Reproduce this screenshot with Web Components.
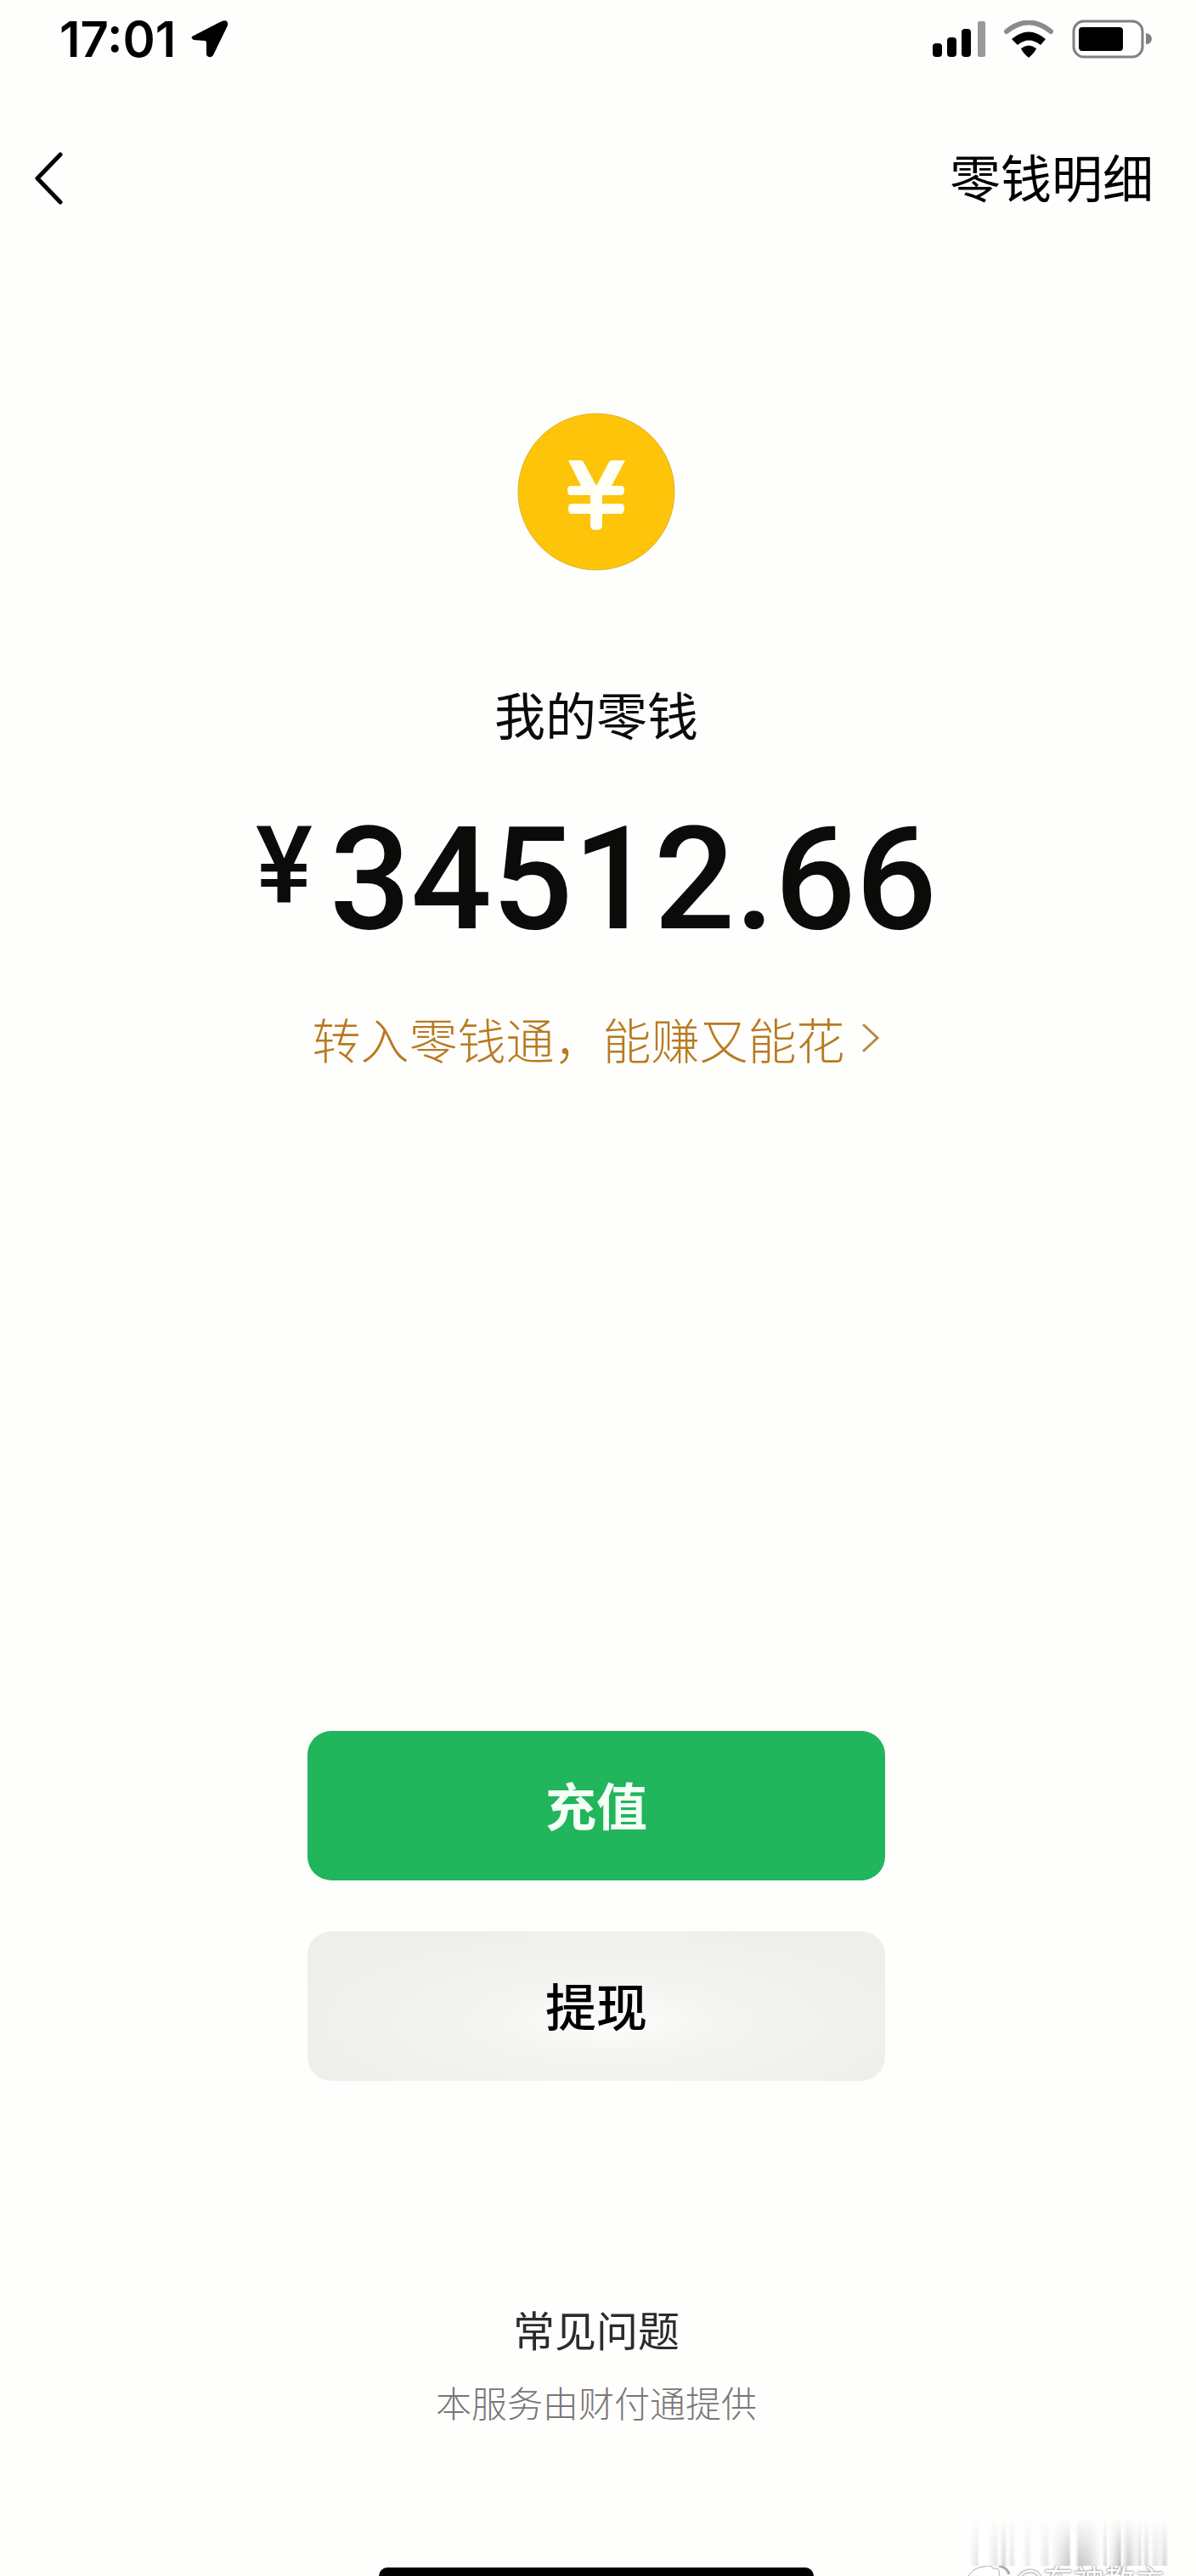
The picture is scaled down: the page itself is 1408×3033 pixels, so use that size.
<!DOCTYPE html>
<html lang="zh-CN">
<head>
<meta charset="UTF-8">
<meta name="viewport" content="width=device-width, initial-scale=1.0">
<title>零钱</title>
<style>
    body {
        margin: 0;
        background-color: #fefefd;
        color: #0b0b0a;
        font-family: "Noto Sans CJK SC", sans-serif;
    }
</style>
</head>
<body>
<wallet-page>
    <status-bar slot="top" time="17:01"></status-bar>
    <nav-bar slot="top">零钱明细</nav-bar>
    <balance-card amount="34512.66">
        我的零钱
        <span slot="promo">转入零钱通，能赚又能花</span>
    </balance-card>
    <action-button variant="primary">充值</action-button>
    <action-button>提现</action-button>
    <page-footer slot="bottom" note="本服务由财付通提供">常见问题</page-footer>
    <water-mark slot="mark">@东神教主</water-mark>
</wallet-page>

<script>
class WalletPage extends HTMLElement {
    constructor() {
        super();
        this.attachShadow({ mode: 'open' });
        this.shadowRoot.innerHTML = `
        <style>
:host {
    position: relative;
    display: flex;
    flex-direction: column;
    min-height: 100vh;
}
main {
    display: flex;
    flex-direction: column;
    align-items: center;
    gap: 60px;
    padding-right: 4px;
}
        </style>
        <header><slot name="top"></slot></header>
        <main><slot></slot></main>
        <slot name="bottom"></slot>
        <slot name="mark"></slot>
        `;
    }
}

class StatusBar extends HTMLElement {
    constructor() {
        super();
        this.attachShadow({ mode: 'open' });
    }

    connectedCallback() {
        this.shadowRoot.innerHTML = `
        <style>
:host {
    display: flex;
    justify-content: space-between;
    align-items: center;
    height: 92px;
    padding: 0 52px 0 70px;
}
.left, .right {
    display: flex;
    align-items: center;
}
.left {
    gap: 18px;
}
.right {
    gap: 22px;
}
time {
    font: 600 58px/92px Inter, sans-serif;
    color: #000;
}
svg {
    display: block;
}
        </style>
        <div class="left">
            <time>${this.getAttribute('time')}</time>
            <svg width="44" height="46" viewBox="0 0 44 46" aria-hidden="true">
                <path d="M3 19 L36 2 Q44 -1 43 7 L26 42 Q23 46 19 43 Q18 42 18 40 V27 Q18 25 16 25 L3 24 Q-2 21 3 19Z"/>
            </svg>
        </div>
        <div class="right">
            <svg width="62" height="44" viewBox="0 0 62 44" aria-hidden="true">
                <rect x="0" y="27" width="11" height="16" rx="4"/>
                <rect x="17" y="20" width="11" height="23" rx="4"/>
                <rect x="34" y="10" width="11" height="33" rx="4"/>
                <rect x="53" y="1" width="9" height="42" rx="2" fill="#999"/>
            </svg>
            <svg width="58" height="44" viewBox="0 0 58 44" aria-hidden="true">
                <path d="M3 13 Q29 -8 55 13" fill="none" stroke="#8b8b8b" stroke-width="6" stroke-linecap="round"/>
                <path d="M9 22 Q29 5 49 22 L43 29 Q29 18 16 29Z"/>
                <path d="M20 33 Q29 26 38 33 Q37 37 29 44 Q21 37 20 33Z"/>
            </svg>
            <svg width="94" height="46" viewBox="0 0 94 46" aria-hidden="true">
                <rect x="2" y="2" width="81" height="42" rx="12" fill="#fff" stroke="#808080" stroke-width="3"/>
                <rect x="8" y="9" width="52" height="28" rx="4"/>
                <path d="M87 16 Q94 17 94 23 Q93 29 87 29Z" fill="#808080"/>
            </svg>
        </div>
        `;
    }
}

class NavBar extends HTMLElement {
    constructor() {
        super();
        this.attachShadow({ mode: 'open' });
        this.shadowRoot.innerHTML = `
        <style>
:host {
    display: flex;
    justify-content: space-between;
    align-items: center;
    height: 236px;
    box-sizing: border-box;
    padding: 0 50px 0 40px;
    margin-bottom: 158px;
}
button {
    padding: 0;
    border: 0;
    background: none;
    cursor: pointer;
}
svg {
    display: block;
}
a {
    padding-bottom: 6px;
    color: #000;
    font-size: 60px;
    line-height: 88px;
    text-decoration: none;
}
        </style>
        <button type="button" aria-label="返回">
            <svg width="36" height="62" viewBox="0 0 36 62" fill="none" stroke="#000" stroke-width="5" stroke-linecap="round" stroke-linejoin="round">
                <path d="M31 3 L4 31 L31 59"/>
            </svg>
        </button>
        <a href="#"><slot></slot></a>
        `;
    }
}

class BalanceCard extends HTMLElement {
    constructor() {
        super();
        this.attachShadow({ mode: 'open' });
    }

    connectedCallback() {
        this.shadowRoot.innerHTML = `
        <style>
:host {
    display: flex;
    flex-direction: column;
    align-items: center;
    margin-bottom: 712px;
}
.coin {
    display: block;
}
h1 {
    margin: 124px 0 0;
    font-size: 60px;
    line-height: 88px;
    font-weight: 400;
}
.amount {
    display: flex;
    align-items: flex-start;
    gap: 20px;
    margin-top: 52px;
    font-family: Roboto, sans-serif;
    font-weight: 500;
    font-size: 168px;
    line-height: 200px;
}
.amount small {
    font-size: 126px;
    line-height: 168px;
}
a {
    display: flex;
    align-items: center;
    gap: 20px;
    margin-top: 42px;
    color: #b87a20;
    font-size: 57px;
    line-height: 88px;
    font-weight: 300;
    text-decoration: none;
}
        </style>
        <svg class="coin" width="186" height="186" viewBox="0 0 186 186" aria-hidden="true">
            <circle cx="93" cy="93" r="92" fill="#fdc409" stroke="#dfb32a"/>
            <path d="M60 56 H74 Q77 56 78 58 L93 86 L108 58 Q109 56 112 56 H127 L111 86 H122 Q126 86 126 91 Q126 97 122 97 H100 V107 H122 Q126 107 126 112 Q126 119 122 119 H100 V133 Q100 138 93 138 Q86 138 86 133 V119 H64 Q60 119 60 113 Q60 107 64 107 H86 V97 H63 Q59 97 59 91 Q59 86 63 86 H75Z" fill="#fffff4"/>
        </svg>
        <h1><slot></slot></h1>
        <div class="amount"><small>¥</small><span>${this.getAttribute('amount')}</span></div>
        <a href="#">
            <slot name="promo"></slot>
            <svg width="22" height="36" viewBox="0 0 22 36" fill="none" stroke="#b88a45" stroke-width="3" stroke-linecap="round" aria-hidden="true">
                <path d="M3 3 L19 18 L3 33"/>
            </svg>
        </a>
        `;
    }
}

class ActionButton extends HTMLElement {
    constructor() {
        super();
        this.attachShadow({ mode: 'open' });
        this.shadowRoot.innerHTML = `
        <style>
:host {
    display: block;
    width: 680px;
    max-width: 90%;
}
button {
    display: block;
    width: 100%;
    padding: 42px 0 46px;
    border: 0;
    border-radius: 28px;
    background: radial-gradient(ellipse at 52% 60%, #fdfdfc 0, #f4f4f2 28%, #eeeeec 80%);
    color: #000;
    font-family: inherit;
    font-size: 60px;
    line-height: 88px;
    font-weight: 500;
    cursor: pointer;
}
:host([variant="primary"]) button {
    background: #21b55c;
    color: #f4fff6;
    font-weight: 700;
}
        </style>
        <button type="button"><slot></slot></button>
        `;
    }
}

class PageFooter extends HTMLElement {
    constructor() {
        super();
        this.attachShadow({ mode: 'open' });
    }

    connectedCallback() {
        this.shadowRoot.innerHTML = `
        <style>
:host {
    display: flex;
    flex: 1;
    flex-direction: column;
    align-items: center;
    margin-top: 256px;
    padding-right: 4px;
}
a {
    color: #2b2c2f;
    font-size: 49px;
    line-height: 72px;
    text-decoration: none;
}
p {
    margin: 18px 0 0;
    color: #777;
    font-size: 42px;
    line-height: 64px;
    font-weight: 300;
}
.home {
    width: 512px;
    height: 10px;
    margin-top: auto;
    border-radius: 10px 10px 0 0;
    background-color: #000;
}
        </style>
        <a href="#"><slot></slot></a>
        <p>${this.getAttribute('note')}</p>
        <div class="home"></div>
        `;
    }
}

class WaterMark extends HTMLElement {
    constructor() {
        super();
        this.attachShadow({ mode: 'open' });
        this.shadowRoot.innerHTML = `
        <style>
:host {
    position: absolute;
    right: 32px;
    bottom: 0;
    width: 240px;
}
.bars {
    height: 56px;
    opacity: 0.8;
    background: linear-gradient(90deg, #fff 0 2%, #ddd 6%, #fff 7% 11%, #ddd 15%, #fff 17%, #ccc 19%, #fff 21%, #ddd 23%, #fff 25% 28%, #e4e4e2 31%, #fff 33% 36%, #ddd 40%, #fff 42%, #bbb 51%, #fff 52% 54%, #bbb 56%, #ccc 61%, #fff 67%, #ccc 69%, #fff 70%, #ddd 73%, #aaa 76%, #fff 77%, #bbb 80%, #eee 84%, #ccc 86%, #fff 87%, #ccc 89%, #fff 91%, #ddd 93%, #eee 96%, #ccc 98%, #fff 100%);
    -webkit-mask-image: linear-gradient(transparent, #000);
    mask-image: linear-gradient(transparent, #000);
}
.label {
    display: flex;
    gap: 4px;
    height: 14px;
    margin-top: -2px;
    overflow: hidden;
    color: #fff;
    font-size: 36px;
    line-height: 34px;
    text-shadow: 0 0 2px #777, 0 0 3px #999;
    white-space: nowrap;
}
svg {
    flex: none;
}
        </style>
        <div class="bars"></div>
        <div class="label">
            <svg width="54" height="40" viewBox="0 0 54 40" fill="#fff" stroke="#aaa" aria-hidden="true">
                <path d="M2 18 Q8 4 22 3 Q30 0 33 5 Q42 4 40 12 L46 22 Q40 38 22 38 Q2 36 2 18Z"/>
                <path d="M40 2 Q50 4 52 12" fill="none" stroke-width="3"/>
            </svg>
            <slot></slot>
        </div>
        `;
    }
}

customElements.define('wallet-page', WalletPage);
customElements.define('status-bar', StatusBar);
customElements.define('nav-bar', NavBar);
customElements.define('balance-card', BalanceCard);
customElements.define('action-button', ActionButton);
customElements.define('page-footer', PageFooter);
customElements.define('water-mark', WaterMark);
</script>
</body>
</html>
